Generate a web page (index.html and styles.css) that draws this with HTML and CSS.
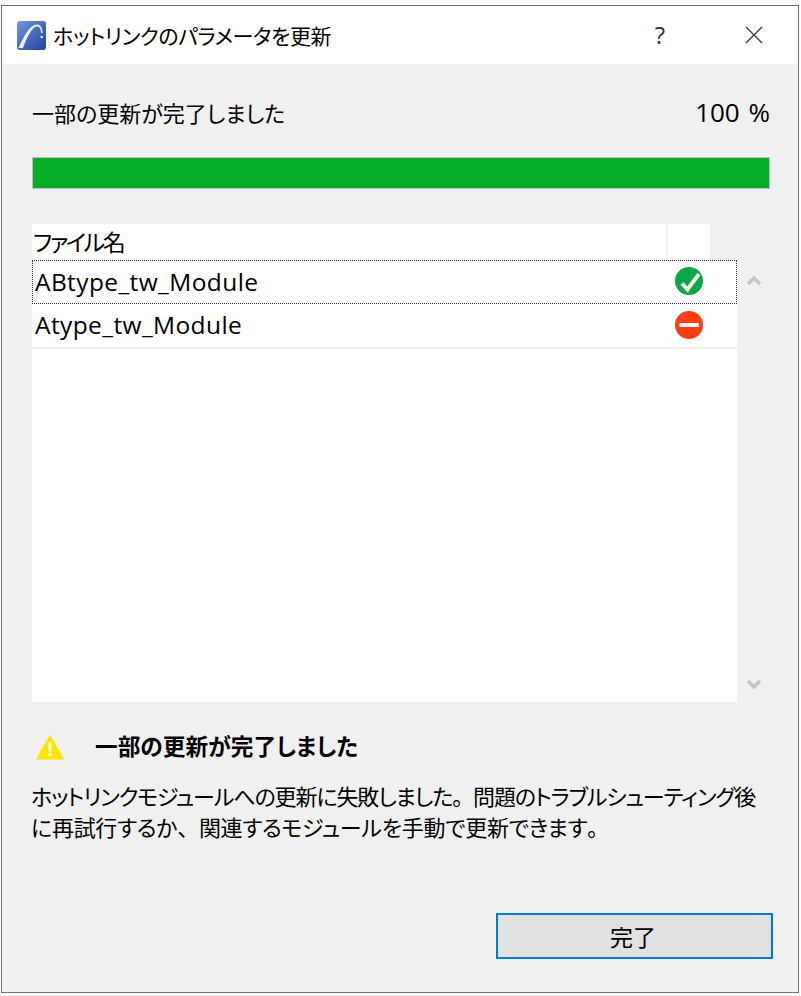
FILE: index.html
```html
<!DOCTYPE html>
<html lang="ja">
<head>
<meta charset="utf-8">
<title>ホットリンクのパラメータを更新</title>
<link rel="stylesheet" href="styles.css">
</head>
<body>
<div class="window">
  <header class="titlebar">
    <svg class="app-icon" width="29" height="29" viewBox="0 0 29 29">
      <defs><linearGradient id="ag" x1="0" y1="0" x2="1" y2="1"><stop offset="0" stop-color="#7199e0"/><stop offset="1" stop-color="#21429a"/></linearGradient></defs>
      <rect x="0" y="0" width="29" height="29" rx="3" fill="url(#ag)"/>
      <path d="M1.500 27C7 15 13 3.500 20 3.500c4 0 5.500 4 5.500 8.500H24c0-3.500-1-6.500-4-6.500C15 5.500 10 16 6 27z" fill="#e8eefa"/>
      <circle cx="24.700" cy="16" r="1.300" fill="#e8eefa"/>
    </svg>
    <span class="title">ホットリンクのパラメータを更新</span>
    <span class="help">?</span>
    <svg class="close" width="18" height="18" viewBox="0 0 18 18"><path d="M1 1l16 16M17 1L1 17" stroke="#333" stroke-width="1.200" fill="none"/></svg>
  </header>
  <main class="content">
    <div class="status">
      <span class="status-text">一部の更新が完了しました</span>
      <span class="percent">100 %</span>
    </div>
    <div class="progress"><div class="progress-fill"></div></div>
    <div class="list-area">
      <div class="list">
        <div class="list-head">
          <div class="head-name">ファイル名</div>
          <div class="head-icon"></div>
        </div>
        <div class="row row-focus">
          <span class="row-name">ABtype_tw_Module</span>
          <svg class="status-icon" width="30" height="30" viewBox="0 0 30 30"><circle cx="15" cy="15" r="14" fill="#0aa744"/><path d="M8 17.500l5.500 6L25 8" fill="none" stroke="#fff" stroke-width="3.800"/></svg>
        </div>
        <div class="row row-line">
          <span class="row-name">Atype_tw_Module</span>
          <svg class="status-icon" width="30" height="30" viewBox="0 0 30 30"><circle cx="15" cy="15" r="14" fill="#ff3d12"/><rect x="5.500" y="13" width="19.500" height="4" rx="1" fill="#fff"/></svg>
        </div>
      </div>
      <div class="scroll">
        <svg width="16" height="12" viewBox="0 0 16 12"><path d="M2 10l6-6 6 6" fill="none" stroke="#c4c4c4" stroke-width="3.500"/></svg>
        <svg width="16" height="12" viewBox="0 0 16 12"><path d="M2 2l6 6 6-6" fill="none" stroke="#c4c4c4" stroke-width="3.500"/></svg>
      </div>
    </div>
    <div class="notice">
      <svg class="warn" width="30" height="26" viewBox="0 0 30 26"><path d="M15 1.500L28.500 25H1.500z" fill="#ffe600" stroke="#ffe600" stroke-linejoin="round"/><rect x="13.600" y="8.500" width="2.800" height="9" fill="#fff"/><rect x="13.600" y="19" width="2.800" height="3" fill="#fff"/></svg>
      <strong class="notice-title">一部の更新が完了しました</strong>
    </div>
    <p class="desc"><span class="line-a">ホットリンクモジュールへの更新に失敗しました<span class="full">。</span>問題のトラブルシューティング後</span><br><span class="line-b">に再試行するか<span class="full">、</span>関連するモジュールを手動で更新できます<span class="full">。</span></span></p>
    <div class="actions"><button class="done" type="button">完了</button></div>
  </main>
</div>
</body>
</html>
```
FILE: styles.css
```css
* { box-sizing: border-box; }
html, body { margin: 0; height: 100%; background: #fff; }
body {
  padding: 5px 2px 3px 1px;
  font-family: "Noto Sans CJK JP", "Open Sans", sans-serif;
  color: #000;
  font-feature-settings: "palt";
}
.window {
  height: 988px;
  border: 1px solid #707070;
  display: flex;
  flex-direction: column;
  background: #f0f0f0;
}
.titlebar {
  height: 58px;
  flex: none;
  background: #fff;
  display: flex;
  align-items: center;
  padding: 0 35px 0 15px;
}
.app-icon { flex: none; }
.title { font-size: 21px; letter-spacing: -0.4px; margin-left: 7px; flex: 1; }
.help { font-size: 24px; color: #333; font-family: "Open Sans", sans-serif; margin-right: 80px; margin-bottom: 2px; }
.content {
  flex: 1;
  padding: 0 28px 33px 30px;
  display: flex;
  flex-direction: column;
}
.status {
  display: flex;
  justify-content: space-between;
  align-items: center;
  margin-top: 33px;
  height: 30px;
  font-size: 22px;
}
.status-text { margin-bottom: 1px; }
.percent { font-family: "Open Sans", sans-serif; font-size: 26px; word-spacing: 2px; }
.progress {
  margin-top: 30px;
  height: 32px;
  border: 1px solid #bdbdbd;
  background: #fff;
}
.progress-fill { height: 100%; background: #05ae27; }
.list-area {
  margin-top: 35px;
  display: flex;
  height: 478px;
}
.list { width: 705px; flex: none; display: flex; flex-direction: column; background: #fff; }
.list-head { display: flex; height: 36px; background: #f0f0f0; }
.head-name { width: 634px; background: #fff; font-size: 23px; letter-spacing: -2.5px; line-height: 34px; padding-left: 1px; }
.head-icon { width: 42px; margin-left: 2px; background: #fff; }
.row {
  height: 44px;
  display: flex;
  align-items: center;
  justify-content: space-between;
  padding: 0 33px 0 3px;
}
.row-focus { border: 1px dotted #333; padding: 0 32px 0 2px; }
.row-line { height: 45px; border-bottom: 2px solid #eee; }
.row-name { font-family: "Open Sans", sans-serif; font-size: 24.5px; letter-spacing: 0.4px; margin-bottom: 2px; }
.status-icon { flex: none; margin-bottom: 2px; }
.scroll {
  flex: 1;
  display: flex;
  flex-direction: column;
  justify-content: space-between;
  align-items: center;
  padding: 50px 0 11px 0;
}
.notice {
  display: flex;
  align-items: center;
  margin-top: 30px;
  height: 30px;
}
.warn { margin-left: 3px; flex: none; }
.notice-title { margin-left: 30px; margin-bottom: 4px; font-size: 22.7px; font-weight: 700; }
.desc {
  margin: 18px 0 0;
  margin-left: -1px;
  font-size: 22px;
  line-height: 31px;
  white-space: nowrap;
}
.line-a { letter-spacing: -1.12px; }
.line-b { letter-spacing: -0.28px; }
.full { font-feature-settings: normal; }
.actions { margin-top: auto; margin-right: -3px; display: flex; justify-content: flex-end; }
.done {
  width: 277px;
  height: 46px;
  border: 2px solid #0078d7;
  background: #e1e1e1;
  font: inherit;
  font-size: 23px;
  color: #000;
  padding: 0 3px 0 0;
}
```
